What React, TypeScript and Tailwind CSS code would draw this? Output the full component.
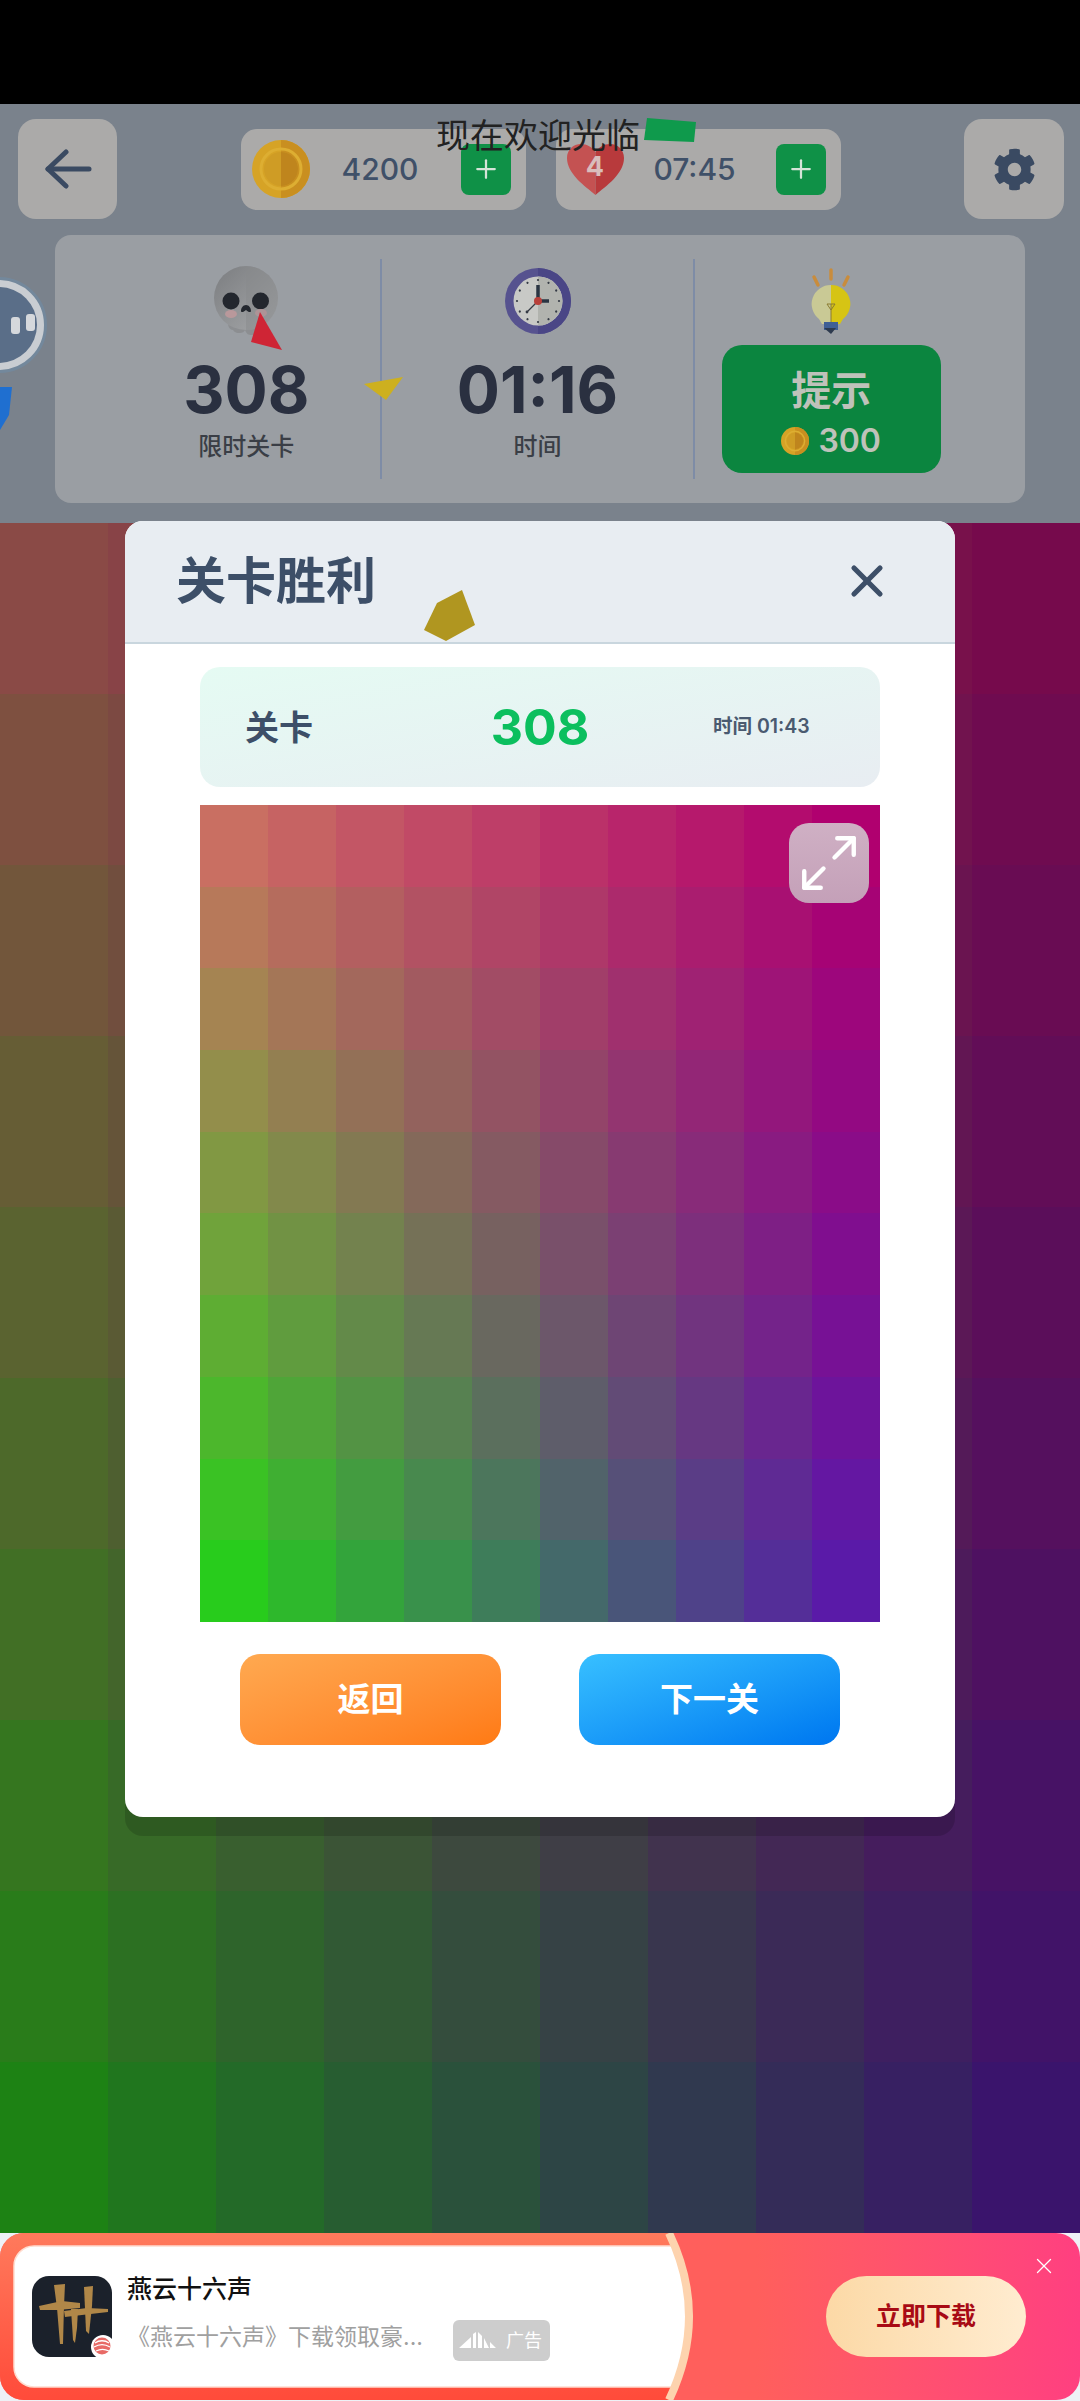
import { Maximize2, Plus, X } from "lucide-react";
import { FaCog } from "react-icons/fa";

type RGB = [number, number, number];

const mix = (a: RGB, b: RGB, t: number): RGB =>
  [a[0] + (b[0] - a[0]) * t, a[1] + (b[1] - a[1]) * t, a[2] + (b[2] - a[2]) * t] as RGB;

function Mosaic({ tl, tr, bl, br, className }: { tl: RGB; tr: RGB; bl: RGB; br: RGB; className: string }) {
  const cells = [];
  for (let r = 0; r < 10; r++) {
    for (let c = 0; c < 10; c++) {
      const [red, green, blue] = mix(mix(tl, tr, c / 9), mix(bl, br, c / 9), r / 9);
      cells.push(
        <div key={`${r}-${c}`} style={{ backgroundColor: `rgb(${red}, ${green}, ${blue})` }} />
      );
    }
  }
  return <div className={`grid grid-cols-10 grid-rows-10 ${className}`}>{cells}</div>;
}

function Coin({ className }: { className: string }) {
  return (
    <svg viewBox="0 0 58 58" className={className}>
      <circle cx="29" cy="29" r="29" fill="#d6a326" />
      <path d="M29 0a29 29 0 0 1 0 58z" fill="#c98f20" />
      <circle cx="29" cy="29" r="20" fill="none" stroke="#ddae32" strokeWidth="3" />
      <circle cx="29" cy="29" r="17" fill="#cf9c25" />
      <path d="M29 12a17 17 0 0 1 0 34z" fill="#bf851d" />
    </svg>
  );
}

function Heart() {
  return (
    <div className="relative h-[51px] w-[57px] shrink-0">
      <svg viewBox="0 0 57 51" className="h-full w-full">
        <path d="M28.5 51C18 42 0 30 0 14 0 6 6 0 14 0c6 0 11 3 14.5 8z" fill="#c45252" />
        <path d="M28.5 51C39 42 57 30 57 14 57 6 51 0 43 0c-6 0-11 3-14.5 8z" fill="#b83a3c" />
      </svg>
      <span className="absolute inset-0 flex items-center justify-center pb-[3px] text-[27px] font-bold text-[#d9bdbb]">
        4
      </span>
    </div>
  );
}

function Skull() {
  return (
    <svg viewBox="0 0 64 70" className="h-[70px] w-[64px]">
      <defs>
        <linearGradient id="skullLeft" x1="0" y1="0" x2="1" y2="1">
          <stop offset="0" stopColor="#7b7d80" />
          <stop offset="1" stopColor="#a6a8aa" />
        </linearGradient>
      </defs>
      <path d="M14 50h30v10c0 5-3 9-7 9s-5-3-6-5c-1 2-2 3-6 3-4 0-5-2-6-3-3 0-5-3-5-7z" fill="#8c8e91" />
      <circle cx="32" cy="32" r="32" fill="url(#skullLeft)" />
      <path d="M32 0a32 32 0 0 1 0 64z" fill="#87898c" opacity="0.5" />
      <circle cx="17" cy="35" r="8.5" fill="#23272e" />
      <circle cx="46.5" cy="35" r="8.5" fill="#23272e" />
      <path d="M32 39c3 0 5 3 5 6 0 2-3 1-5-1-2 2-5 3-5 1 0-3 2-6 5-6z" fill="#23272e" />
      <ellipse cx="17" cy="48" rx="6" ry="4" fill="#b9989b" />
      <ellipse cx="47" cy="47" rx="6" ry="4" fill="#ad9497" />
    </svg>
  );
}

function Clock() {
  const ticks = [0, 30, 60, 90, 120, 150, 180, 210, 240, 270, 300, 330];
  return (
    <svg viewBox="0 0 66 66" className="h-[66px] w-[66px]">
      <circle cx="33" cy="33" r="33" fill="#56528f" />
      <path d="M33 0a33 33 0 0 1 0 66z" fill="#4a4686" />
      <circle cx="33" cy="33" r="24.5" fill="#c8c9c6" />
      <path d="M33 8.500a24.500 24.500 0 0 1 0 49z" fill="#b1b3ae" />
      {ticks.map((t) => (
        <circle key={t} cx="33" cy="12" r="1.100" fill="#343a44" transform={`rotate(${t} 33 33)`} />
      ))}
      <path d="M33 33V17" stroke="#2a3442" strokeWidth="3.500" />
      <path d="M33 33H44" stroke="#2a3442" strokeWidth="3.500" />
      <path d="M33 33L22 44" stroke="#343a44" strokeWidth="1.200" />
      <circle cx="22" cy="44" r="1.400" fill="#343a44" />
      <circle cx="33" cy="33" r="4" fill="#b8403a" />
    </svg>
  );
}

function Bulb() {
  return (
    <svg viewBox="0 0 46 66" className="h-[66px] w-[46px]">
      <g stroke="#c98c3c" strokeWidth="3.500" strokeLinecap="round">
        <path d="M6 9l4 8" />
        <path d="M23 2v9" />
        <path d="M40 9l-4 8" />
      </g>
      <path d="M23 17a19 19 0 0 0-12 34l3 5h9z" fill="#c9c995" />
      <path d="M23 17a19 19 0 0 1 12 34l-3 5h-9z" fill="#d6c414" />
      <path d="M19 36h8M23 36v18M19 36l4 6 4-6" stroke="#8a7b30" strokeWidth="1" fill="none" />
      <path d="M16 54h14v8H16z" fill="#3f5f95" />
      <path d="M16 60h12l-5 6z" fill="#2d3a4e" />
    </svg>
  );
}

function GameIcon() {
  return (
    <div className="relative h-[81px] w-[80px] shrink-0">
      <svg viewBox="0 0 80 81" className="h-full w-full">
        <rect width="80" height="81" rx="17" fill="#1b212b" />
        <g fill="#b08748">
          <polygon points="22,9 33,8 32,30 31,68 28,68 25,32" />
          <polygon points="7,30 30,25 48,27 48,32 26,34 8,34" />
          <polygon points="39,33 46,33 45,52 43,67 41,64" />
          <polygon points="52,11 61,10 60,30 57,58 54,55" />
          <polygon points="32,35 55,32 76,33 76,36 50,39 33,41" />
        </g>
        <circle cx="71" cy="71" r="12" fill="#ffffff" />
        <circle cx="70" cy="70" r="8.500" fill="#e86a66" />
        <path d="M63 67c4-3 10-3 14 0M62 71c5-3 11-3 16 0M64 75c4-2 9-2 13 0" stroke="#ffffff" strokeWidth="1.300" fill="none" />
      </svg>
    </div>
  );
}

function ResourcePill({ icon, value }: { icon: React.ReactNode; value: string }) {
  return (
    <div className="flex h-[81px] w-[285px] items-center rounded-[16px] bg-[#abaaa9] pl-[11px] pr-[15px]">
      {icon}
      <span className="flex-1 pr-[10px] text-center text-[30px] font-medium text-[#3f5068]">{value}</span>
      <div className="flex h-[51px] w-[50px] items-center justify-center rounded-[8px] bg-[#0f9147] text-[#d5e4d8]">
        <Plus size={30} strokeWidth={1.8} />
      </div>
    </div>
  );
}

function StatColumn({ value, label, icon, width, border }: { value: string; label: string; icon: React.ReactNode; width: string; border?: boolean }) {
  return (
    <div className={`flex flex-col items-center ${width} ${border ? "border-r-2 border-[#7e8ca6]" : ""}`}>
      <div className="mt-[7px] flex h-[70px] items-center justify-center">{icon}</div>
      <div className="mt-[22px] text-[64px] leading-[64px] font-bold text-[#2a3040]">{value}</div>
      <div className="mt-[9px] text-[24px] leading-[32px] font-medium text-[#3a3e46]">{label}</div>
    </div>
  );
}

export default function App() {
  return (
    <div className="relative h-[2401px] w-full overflow-hidden bg-[#eef1f6] font-['Inter','Noto_Sans_CJK_SC',sans-serif]">
      {/* Status bar */}
      <div className="h-[104px] bg-black" />

      {/* Game header, dimmed by the dialog overlay */}
      <div className="h-[419px] bg-[#7a828c] pt-[15px]">
        <div className="flex items-center justify-between pl-[18px] pr-[16px]">
          <div className="flex h-[100px] w-[99px] items-center justify-center rounded-[18px] bg-[#abaaa9]">
            <svg viewBox="0 0 48 40" className="h-[40px] w-[48px]" fill="none" stroke="#3a4a62" strokeWidth="5" strokeLinecap="round" strokeLinejoin="round">
              <path d="M22 3L4 20l18 17" />
              <path d="M4 20h41" />
            </svg>
          </div>
          <div className="flex gap-[30px]">
            <ResourcePill icon={<Coin className="h-[58px] w-[58px] shrink-0" />} value="4200" />
            <ResourcePill icon={<Heart />} value="07:45" />
          </div>
          <div className="flex h-[100px] w-[100px] items-center justify-center rounded-[18px] bg-[#abaaa9] text-[#3a4a62]">
            <FaCog size={43} />
          </div>
        </div>

        <div className="mx-[55px] mt-[16px] flex h-[268px] rounded-[16px] bg-[#9a9ea3] px-[58px] py-[24px]">
          <StatColumn value="308" label="限时关卡" icon={<Skull />} width="w-[269px]" border />
          <StatColumn value="01:16" label="时间" icon={<Clock />} width="w-[314px]" border />
          <div className="flex w-[272px] flex-col items-center">
            <div className="mt-[9px] flex h-[66px] items-center">
              <Bulb />
            </div>
            <div className="mt-[11px] flex h-[128px] w-[219px] flex-col items-center rounded-[20px] bg-[#0b853f] text-[#bfc2ba]">
              <div className="mt-[20px] text-[40px] leading-[52px] font-bold">提示</div>
              <div className="mt-[6px] flex items-center gap-[9px]">
                <Coin className="h-[30px] w-[28px]" />
                <span className="text-[32px] leading-[36px] font-semibold">300</span>
              </div>
            </div>
          </div>
        </div>
      </div>

      {/* Puzzle board behind the dialog */}
      <Mosaic tl={[138, 74, 70]} tr={[118, 10, 76]} bl={[29, 130, 20]} br={[58, 20, 108]} className="h-[1710px]" />

      {/* Ad banner */}
      <div className="relative h-[167px] overflow-hidden rounded-[24px] bg-gradient-to-r from-[#ff5f5c] from-[70%] to-[#ff3f80]">
        <svg viewBox="0 0 1080 167" className="absolute inset-0 h-full w-full">
          <defs>
            <linearGradient id="adFrame" x1="0" y1="0" x2="0" y2="1">
              <stop offset="0" stopColor="#ff7a5c" />
              <stop offset="1" stopColor="#ff4b3a" />
            </linearGradient>
          </defs>
          <path d="M0 0H669Q709 83 669 167H0z" fill="url(#adFrame)" />
          <path d="M34 13H674Q709 83 674 154H34A20 20 0 0 1 14 134V33A20 20 0 0 1 34 13z" fill="#ffffff" stroke="#ffdccf" strokeWidth="1.500" />
          <path d="M669 0Q709 83 669 167" fill="none" stroke="#fdd3ae" strokeWidth="8" />
        </svg>
        <div className="relative flex h-full items-center pl-[32px] pr-[54px]">
          <GameIcon />
          <div className="ml-[15px] flex flex-col">
            <div className="h-[32px] text-[25px] leading-[32px] font-medium text-[#111111]">燕云十六声</div>
            <div className="mt-[15px] flex h-[41px] items-center">
              <div className="w-[326px] pb-[5px] text-[23px] whitespace-nowrap text-[#a0a0a0]">《燕云十六声》下载领取豪...</div>
              <div className="flex h-[41px] w-[97px] items-center rounded-[6px] bg-[#cdcdcd] pl-[6px] text-white">
                <svg viewBox="0 0 40 16" className="h-[16px] w-[40px]" fill="#ffffff">
                  <path d="M0 16L12 5v11zM14 2l3-2v16h-3zM19 0l4 4v12h-4zM25 6l5 10h-5zM31 10l6 6h-6z" />
                </svg>
                <span className="ml-[7px] text-[18px]">广告</span>
              </div>
            </div>
          </div>
          <div className="ml-auto flex h-[81px] w-[200px] items-center justify-center rounded-full bg-gradient-to-r from-[#fcd9a6] to-[#ffecd0] text-[25px] font-bold text-[#a80a14]">
            立即下载
          </div>
        </div>
        <X size={26} strokeWidth={1.2} className="absolute right-[23px] top-[20px] text-white" />
      </div>

      {/* Result dialog */}
      <div className="absolute left-[125px] top-[521px] h-[1296px] w-[830px] overflow-hidden rounded-[18px] bg-white shadow-[0_19px_0_rgba(0,0,0,0.15)]">
        <div className="flex h-[123px] items-center justify-between border-b-2 border-[#c9d6de] bg-[#e8edf2] pl-[51px] pr-[66px]">
          <span className="text-[50px] font-bold text-[#3d4f68]">关卡胜利</span>
          <X size={52} strokeWidth={2.4} className="mr-[-4px] mb-[2px] text-[#3d4f68]" />
        </div>
        <div className="px-[75px] pt-[23px]">
          <div className="relative flex h-[120px] items-center justify-center rounded-[20px] bg-gradient-to-br from-[#e5fbf3] to-[#e8edf2]">
            <span className="absolute left-[45px] text-[34px] font-bold text-[#3d4f68]">关卡</span>
            <span className="text-[50px] font-bold text-[#0bbf5e]">308</span>
            <span className="absolute left-[513px] text-[19.5px] font-semibold text-[#4a5a70]">时间 01:43</span>
          </div>
          <div className="relative mt-[18px]">
            <Mosaic tl={[201, 111, 98]} tr={[176, 0, 111]} bl={[40, 204, 28]} br={[90, 26, 168]} className="h-[817px]" />
            <div className="absolute right-[11px] top-[18px] flex h-[80px] w-[80px] items-center justify-center rounded-[20px] bg-gradient-to-b from-[#cfb0c4] to-[#c4a0b8] text-white">
              <Maximize2 size={66} strokeWidth={1.6} />
            </div>
          </div>
          <div className="mt-[32px] flex justify-between px-[40px]">
            <div className="flex h-[91px] w-[261px] items-center justify-center rounded-[20px] bg-gradient-to-br from-[#ffa950] to-[#ff7a12] text-[33px] font-bold text-white">
              返回
            </div>
            <div className="flex h-[91px] w-[261px] items-center justify-center rounded-[20px] bg-gradient-to-br from-[#38c0ff] to-[#0076f0] text-[33px] font-bold text-white">
              下一关
            </div>
          </div>
        </div>
      </div>

      {/* Floating bits from the win animation */}
      <svg viewBox="0 0 32 39" className="absolute left-[251px] top-[312px] h-[39px] w-[32px]">
        <polygon points="9,0 31,38 0,30" fill="#cf2535" />
      </svg>
      <svg viewBox="0 0 39 23" className="absolute left-[364px] top-[377px] h-[23px] w-[39px]">
        <polygon points="0,7 39,0 22,23" fill="#cdb01f" />
      </svg>
      <svg viewBox="0 0 52 24" className="absolute left-[644px] top-[118px] h-[24px] w-[52px]">
        <polygon points="3,0 52,4 50,24 0,22" fill="#0f9a4c" />
      </svg>
      <svg viewBox="0 0 51 51" className="absolute left-[424px] top-[590px] h-[51px] w-[51px]">
        <polygon points="38,0 51,35 22,51 0,40 13,13" fill="#b09620" />
      </svg>

      {/* Banner text running over the header */}
      <div className="absolute left-[436px] top-[119px] text-[34px] leading-[34px] whitespace-nowrap text-[#222222]">
        现在欢迎光临
      </div>

      {/* Side mascot, clipped by the screen edge */}
      <div className="absolute left-[-49px] top-[277px] flex h-[96px] w-[96px] items-center justify-center rounded-full border-[3px] border-[#73889c] bg-[#c9cdd2]">
        <div className="flex h-[76px] w-[76px] items-center justify-end gap-[6px] rounded-full bg-[#5a6e88] pr-[2px]">
          <div className="h-[17px] w-[9px] rounded-[3px] bg-[#d5d8dc]" />
          <div className="h-[17px] w-[9px] -translate-y-[3px] rounded-[3px] bg-[#d5d8dc]" />
        </div>
      </div>
      <svg viewBox="0 0 12 43" className="absolute left-0 top-[387px] h-[43px] w-[12px]">
        <polygon points="0,0 12,0 9,28 0,43" fill="#1f6fd0" />
      </svg>
    </div>
  );
}
